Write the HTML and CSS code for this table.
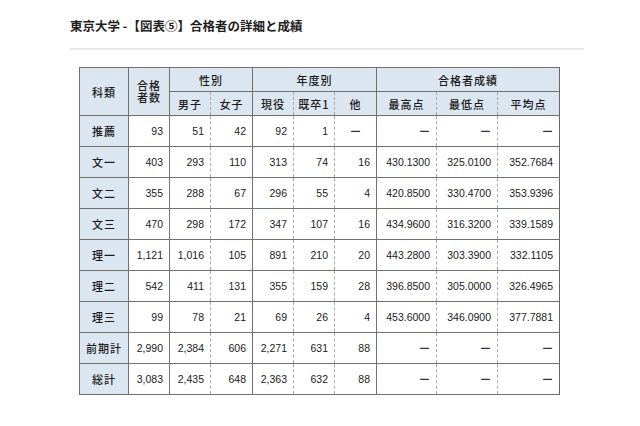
FILE: index.html
```html
<!DOCTYPE html>
<html lang="ja">
<head>
    <meta charset="UTF-8">
    <meta name="viewport" content="width=device-width, initial-scale=1.0">
    <title>東京大学 - 合格者の詳細と成績</title>
    <link rel="stylesheet" href="styles.css">
</head>
<body>
    <div class="pagina">
        <h1 class="titulo">東京大学 -【図表⑤】合格者の詳細と成績</h1>
        <div class="linha"></div>

        <table class="tabela">
            <colgroup>
                <col style="width: 49px">
                <col style="width: 41px">
                <col style="width: 41px">
                <col style="width: 42px">
                <col style="width: 41px">
                <col style="width: 41px">
                <col style="width: 42px">
                <col style="width: 60px">
                <col style="width: 61px">
                <col style="width: 62px">
            </colgroup>
            <thead>
                <tr class="cab1">
                    <th rowspan="2">科類</th>
                    <th rowspan="2" class="duas"><span>合格</span><span>者数</span></th>
                    <th colspan="2">性別</th>
                    <th colspan="3">年度別</th>
                    <th colspan="3">合格者成績</th>
                </tr>
                <tr class="cab2">
                    <th>男子</th>
                    <th class="tr">女子</th>
                    <th>現役</th>
                    <th class="tr">既卒1</th>
                    <th class="tr">他</th>
                    <th>最高点</th>
                    <th class="tr">最低点</th>
                    <th class="tr">平均点</th>
                </tr>
            </thead>
            <tbody>
                <tr>
                    <th>推薦</th>
                    <td>93</td><td>51</td><td class="tr">42</td>
                    <td>92</td><td class="tr">1</td><td class="tr centro"><span class="traco">ー</span></td>
                    <td><span class="traco">ー</span></td><td class="tr"><span class="traco">ー</span></td><td class="tr"><span class="traco">ー</span></td>
                </tr>
                <tr>
                    <th>文一</th>
                    <td>403</td><td>293</td><td class="tr">110</td>
                    <td>313</td><td class="tr">74</td><td class="tr">16</td>
                    <td>430.1300</td><td class="tr">325.0100</td><td class="tr">352.7684</td>
                </tr>
                <tr>
                    <th>文二</th>
                    <td>355</td><td>288</td><td class="tr">67</td>
                    <td>296</td><td class="tr">55</td><td class="tr">4</td>
                    <td>420.8500</td><td class="tr">330.4700</td><td class="tr">353.9396</td>
                </tr>
                <tr>
                    <th>文三</th>
                    <td>470</td><td>298</td><td class="tr">172</td>
                    <td>347</td><td class="tr">107</td><td class="tr">16</td>
                    <td>434.9600</td><td class="tr">316.3200</td><td class="tr">339.1589</td>
                </tr>
                <tr>
                    <th>理一</th>
                    <td>1,121</td><td>1,016</td><td class="tr">105</td>
                    <td>891</td><td class="tr">210</td><td class="tr">20</td>
                    <td>443.2800</td><td class="tr">303.3900</td><td class="tr">332.1105</td>
                </tr>
                <tr>
                    <th>理二</th>
                    <td>542</td><td>411</td><td class="tr">131</td>
                    <td>355</td><td class="tr">159</td><td class="tr">28</td>
                    <td>396.8500</td><td class="tr">305.0000</td><td class="tr">326.4965</td>
                </tr>
                <tr>
                    <th>理三</th>
                    <td>99</td><td>78</td><td class="tr">21</td>
                    <td>69</td><td class="tr">26</td><td class="tr">4</td>
                    <td>453.6000</td><td class="tr">346.0900</td><td class="tr">377.7881</td>
                </tr>
                <tr>
                    <th>前期計</th>
                    <td>2,990</td><td>2,384</td><td class="tr">606</td>
                    <td>2,271</td><td class="tr">631</td><td class="tr">88</td>
                    <td><span class="traco">ー</span></td><td class="tr"><span class="traco">ー</span></td><td class="tr"><span class="traco">ー</span></td>
                </tr>
                <tr>
                    <th>総計</th>
                    <td>3,083</td><td>2,435</td><td class="tr">648</td>
                    <td>2,363</td><td class="tr">632</td><td class="tr">88</td>
                    <td><span class="traco">ー</span></td><td class="tr"><span class="traco">ー</span></td><td class="tr"><span class="traco">ー</span></td>
                </tr>
            </tbody>
        </table>
    </div>
</body>
</html>
```

FILE: styles.css
```css
body {
    font-family: "Noto Sans CJK JP", sans-serif;
    margin: 0;
    padding: 0;
    background-color: #fff;
    color: #222;
}
.pagina {
    width: 514px;
    padding: 16px 0 0 70px;
}
.titulo {
    margin: 0;
    font-size: 12.5px;
    line-height: 19px;
    font-weight: bold;
    color: #1e1e1e;
}
.linha {
    height: 2px;
    margin-top: 13px;
    background-color: #e8e8e8;
}
.tabela {
    margin: 17px 0 0 9px;
    width: 480px;
    table-layout: fixed;
    border-collapse: collapse;
    border: 1px solid #666;
    color: #1a1a1a;
}
.tabela th,
.tabela td {
    padding: 0;
    border-top: 1px solid #707070;
    border-bottom: 1px solid #707070;
    border-left: 1px solid #707070;
    border-right: none;
}
.tabela th {
    background-color: #dce6f1;
    font-size: 11px;
    font-weight: 500;
    letter-spacing: 1px;
    text-align: center;
    color: #1a1a1a;
}
.tabela .cab1 th,
.tabela .cab2 th {
    height: 23px;
}
.tabela .duas span {
    display: block;
    height: 11.5px;
    line-height: 11.5px;
    font-size: 11px;
}
.tabela tbody th {
    height: 30px;
}
.tabela td {
    font-family: "Liberation Sans", Arial, sans-serif;
    font-size: 10.5px;
    text-align: right;
    padding-right: 6px;
    background-color: #fff;
}
.tabela .tr {
    border-left: 1px dashed #a8a8a8;
}
.tabela td.centro {
    text-align: center;
    padding-right: 0;
}
.traco {
    font-family: "Noto Sans CJK JP", sans-serif;
    font-size: 11px;
    font-weight: 500;
    color: #333;
}
```
